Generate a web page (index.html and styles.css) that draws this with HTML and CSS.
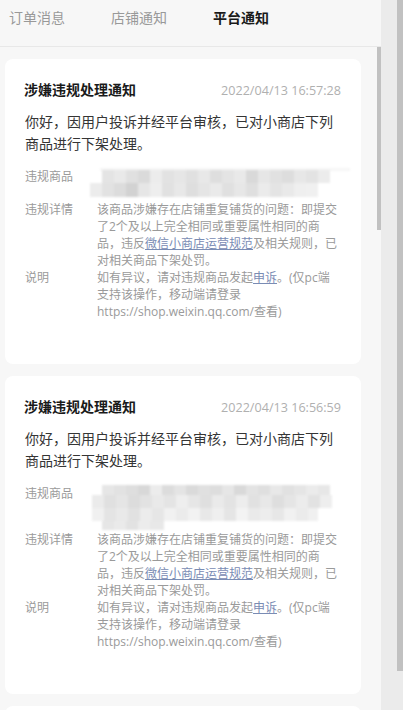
FILE: index.html
```html
<!DOCTYPE html>
<html lang="zh-CN">
<head>
    <meta charset="UTF-8">
    <meta name="viewport" content="width=device-width, initial-scale=1.0">
    <title>平台通知</title>
    <link rel="stylesheet" href="styles.css">
</head>
<body>
    <div class="page">
        <div class="main">
            <nav class="tabs">
                <span class="tab">订单消息</span>
                <span class="tab">店铺通知</span>
                <span class="tab active">平台通知</span>
            </nav>

            <div class="scroll">
                <div class="list">
                    <div class="card">
                        <div class="card-head">
                            <span class="card-title">涉嫌违规处理通知</span>
                            <span class="card-time">2022/04/13 16:57:28</span>
                        </div>
                        <p class="card-text">你好，因用户投诉并经平台审核，已对小商店下列商品进行下架处理。</p>
                        <div class="row row-goods">
                            <span class="row-label">违规商品</span>
                            <div class="row-value">
                                <svg class="mosaic" width="260" height="33" viewBox="0 0 260 33">
                                    <rect x="10" y="0" width="250" height="3" fill="#f6f6f6"/>
                                    <rect x="12" y="2" width="12" height="13" fill="#e4e4e4"/>
                                    <rect x="24" y="2" width="12" height="13" fill="#e9e9e9"/>
                                    <rect x="36" y="2" width="12" height="13" fill="#e0e0e0"/>
                                    <rect x="48" y="2" width="12" height="13" fill="#dadada"/>
                                    <rect x="60" y="2" width="12" height="13" fill="#ececec"/>
                                    <rect x="72" y="2" width="12" height="13" fill="#e2e2e2"/>
                                    <rect x="84" y="2" width="12" height="13" fill="#e6e6e6"/>
                                    <rect x="96" y="2" width="12" height="13" fill="#e0e0e0"/>
                                    <rect x="108" y="2" width="12" height="13" fill="#e8e8e8"/>
                                    <rect x="120" y="2" width="12" height="13" fill="#dedede"/>
                                    <rect x="132" y="2" width="12" height="13" fill="#e4e4e4"/>
                                    <rect x="144" y="2" width="12" height="13" fill="#e9e9e9"/>
                                    <rect x="156" y="2" width="12" height="13" fill="#d9d9d9"/>
                                    <rect x="168" y="2" width="12" height="13" fill="#e6e6e6"/>
                                    <rect x="180" y="2" width="12" height="13" fill="#e1e1e1"/>
                                    <rect x="192" y="2" width="12" height="13" fill="#dddddd"/>
                                    <rect x="204" y="2" width="12" height="13" fill="#e7e7e7"/>
                                    <rect x="216" y="2" width="12" height="13" fill="#e3e3e3"/>
                                    <rect x="228" y="2" width="12" height="13" fill="#ececec"/>
                                    <rect x="0" y="15" width="12" height="14" fill="#ececec"/>
                                    <rect x="12" y="15" width="12" height="14" fill="#e2e2e2"/>
                                    <rect x="24" y="15" width="12" height="14" fill="#dcdcdc"/>
                                    <rect x="36" y="15" width="12" height="14" fill="#d2d2d2"/>
                                    <rect x="48" y="15" width="12" height="14" fill="#e6e6e6"/>
                                    <rect x="60" y="15" width="12" height="14" fill="#eeeeee"/>
                                    <rect x="72" y="15" width="12" height="14" fill="#e1e1e1"/>
                                    <rect x="84" y="15" width="12" height="14" fill="#e8e8e8"/>
                                    <rect x="96" y="15" width="12" height="14" fill="#dedede"/>
                                    <rect x="108" y="15" width="12" height="14" fill="#e5e5e5"/>
                                    <rect x="120" y="15" width="12" height="14" fill="#eaeaea"/>
                                    <rect x="132" y="15" width="12" height="14" fill="#e0e0e0"/>
                                    <rect x="144" y="15" width="12" height="14" fill="#e7e7e7"/>
                                    <rect x="156" y="15" width="12" height="14" fill="#dfdfdf"/>
                                    <rect x="168" y="15" width="12" height="14" fill="#ebebeb"/>
                                    <rect x="180" y="15" width="12" height="14" fill="#e4e4e4"/>
                                    <rect x="192" y="15" width="12" height="14" fill="#e9e9e9"/>
                                    <rect x="204" y="15" width="12" height="14" fill="#efefef"/>
                                    <rect x="216" y="15" width="12" height="14" fill="#f0f0f0"/>
                                </svg>
                            </div>
                        </div>
                        <div class="row">
                            <span class="row-label">违规详情</span>
                            <div class="row-value">该商品涉嫌存在店铺重复铺货的问题：即提交了2个及以上完全相同或重要属性相同的商品，违反<a class="link">微信小商店运营规范</a>及相关规则，已对相关商品下架处罚。</div>
                        </div>
                        <div class="row">
                            <span class="row-label">说明</span>
                            <div class="row-value">如有异议，请对违规商品发起<a class="link">申诉</a>。(仅pc端支持该操作，移动端请登录 https://shop.weixin.qq.com/查看)</div>
                        </div>
                    </div>

                    <div class="card">
                        <div class="card-head">
                            <span class="card-title">涉嫌违规处理通知</span>
                            <span class="card-time">2022/04/13 16:56:59</span>
                        </div>
                        <p class="card-text">你好，因用户投诉并经平台审核，已对小商店下列商品进行下架处理。</p>
                        <div class="row row-goods tall">
                            <span class="row-label">违规商品</span>
                            <div class="row-value">
                                <svg class="mosaic" width="260" height="46" viewBox="0 0 260 46">
                                    <rect x="12" y="0" width="12" height="10" fill="#e6e6e6"/>
                                    <rect x="24" y="0" width="12" height="10" fill="#e2e2e2"/>
                                    <rect x="36" y="0" width="12" height="10" fill="#dedede"/>
                                    <rect x="48" y="0" width="12" height="10" fill="#d8d8d8"/>
                                    <rect x="60" y="0" width="12" height="10" fill="#ececec"/>
                                    <rect x="72" y="0" width="12" height="10" fill="#dcdcdc"/>
                                    <rect x="84" y="0" width="12" height="10" fill="#e4e4e4"/>
                                    <rect x="96" y="0" width="12" height="10" fill="#dadada"/>
                                    <rect x="108" y="0" width="12" height="10" fill="#e0e0e0"/>
                                    <rect x="120" y="0" width="12" height="10" fill="#dddddd"/>
                                    <rect x="132" y="0" width="12" height="10" fill="#e6e6e6"/>
                                    <rect x="144" y="0" width="12" height="10" fill="#d9d9d9"/>
                                    <rect x="156" y="0" width="12" height="10" fill="#e3e3e3"/>
                                    <rect x="168" y="0" width="12" height="10" fill="#dfdfdf"/>
                                    <rect x="180" y="0" width="12" height="10" fill="#e8e8e8"/>
                                    <rect x="192" y="0" width="12" height="10" fill="#e1e1e1"/>
                                    <rect x="204" y="0" width="12" height="10" fill="#e5e5e5"/>
                                    <rect x="216" y="0" width="12" height="10" fill="#ebebeb"/>
                                    <rect x="228" y="0" width="12" height="10" fill="#e7e7e7"/>
                                    <rect x="2" y="10" width="12" height="13" fill="#ebebeb"/>
                                    <rect x="14" y="10" width="12" height="13" fill="#e0e0e0"/>
                                    <rect x="26" y="10" width="12" height="13" fill="#e5e5e5"/>
                                    <rect x="38" y="10" width="12" height="13" fill="#dcdcdc"/>
                                    <rect x="50" y="10" width="12" height="13" fill="#e2e2e2"/>
                                    <rect x="62" y="10" width="12" height="13" fill="#e9e9e9"/>
                                    <rect x="74" y="10" width="12" height="13" fill="#e4e4e4"/>
                                    <rect x="86" y="10" width="12" height="13" fill="#eeeeee"/>
                                    <rect x="98" y="10" width="12" height="13" fill="#e6e6e6"/>
                                    <rect x="110" y="10" width="12" height="13" fill="#dfdfdf"/>
                                    <rect x="122" y="10" width="12" height="13" fill="#eaeaea"/>
                                    <rect x="134" y="10" width="12" height="13" fill="#e3e3e3"/>
                                    <rect x="146" y="10" width="12" height="13" fill="#ededed"/>
                                    <rect x="158" y="10" width="12" height="13" fill="#e1e1e1"/>
                                    <rect x="170" y="10" width="12" height="13" fill="#e8e8e8"/>
                                    <rect x="182" y="10" width="12" height="13" fill="#dedede"/>
                                    <rect x="194" y="10" width="12" height="13" fill="#e5e5e5"/>
                                    <rect x="206" y="10" width="12" height="13" fill="#ececec"/>
                                    <rect x="218" y="10" width="12" height="13" fill="#e2e2e2"/>
                                    <rect x="230" y="10" width="12" height="13" fill="#eeeeee"/>
                                    <rect x="2" y="23" width="12" height="13" fill="#f0f0f0"/>
                                    <rect x="14" y="23" width="12" height="13" fill="#e4e4e4"/>
                                    <rect x="26" y="23" width="12" height="13" fill="#e9e9e9"/>
                                    <rect x="38" y="23" width="12" height="13" fill="#e1e1e1"/>
                                    <rect x="50" y="23" width="12" height="13" fill="#ececec"/>
                                    <rect x="62" y="23" width="12" height="13" fill="#e6e6e6"/>
                                    <rect x="74" y="23" width="12" height="13" fill="#f1f1f1"/>
                                    <rect x="86" y="23" width="12" height="13" fill="#ebebeb"/>
                                    <rect x="98" y="23" width="12" height="13" fill="#f2f2f2"/>
                                    <rect x="110" y="23" width="12" height="13" fill="#e8e8e8"/>
                                    <rect x="122" y="23" width="12" height="13" fill="#efefef"/>
                                    <rect x="134" y="23" width="12" height="13" fill="#e5e5e5"/>
                                    <rect x="146" y="23" width="12" height="13" fill="#f3f3f3"/>
                                    <rect x="158" y="23" width="12" height="13" fill="#eaeaea"/>
                                    <rect x="170" y="23" width="12" height="13" fill="#ededed"/>
                                    <rect x="182" y="23" width="12" height="13" fill="#e7e7e7"/>
                                    <rect x="194" y="23" width="12" height="13" fill="#f1f1f1"/>
                                    <rect x="206" y="23" width="12" height="13" fill="#ebebeb"/>
                                    <rect x="218" y="23" width="10" height="13" fill="#f0f0f0"/>
                                    <rect x="12" y="36" width="12" height="9" fill="#e6e6e6"/>
                                    <rect x="24" y="36" width="12" height="9" fill="#eaeaea"/>
                                    <rect x="36" y="36" width="12" height="9" fill="#e2e2e2"/>
                                    <rect x="48" y="36" width="12" height="9" fill="#ececec"/>
                                    <rect x="60" y="36" width="14" height="9" fill="#e8e8e8"/>
                                </svg>
                            </div>
                        </div>
                        <div class="row">
                            <span class="row-label">违规详情</span>
                            <div class="row-value">该商品涉嫌存在店铺重复铺货的问题：即提交了2个及以上完全相同或重要属性相同的商品，违反<a class="link">微信小商店运营规范</a>及相关规则，已对相关商品下架处罚。</div>
                        </div>
                        <div class="row">
                            <span class="row-label">说明</span>
                            <div class="row-value">如有异议，请对违规商品发起<a class="link">申诉</a>。(仅pc端支持该操作，移动端请登录 https://shop.weixin.qq.com/查看)</div>
                        </div>
                    </div>

                    <div class="card card-empty"></div>
                </div>

                <div class="track"><div class="thumb"></div></div>
            </div>
        </div>

        <div class="outer-bar"><div class="outer-thumb"></div></div>
    </div>
</body>
</html>
```

FILE: styles.css
```css
* { box-sizing: border-box; }
html, body { margin: 0; height: 710px; overflow: hidden; }
body { font-family: "Open Sans", "Noto Sans CJK SC", sans-serif; background: #f7f7f7; color: #333; }

.page { display: flex; height: 710px; }
.main { width: 381px; display: flex; flex-direction: column; background: #f7f7f7; }

.tabs { height: 47px; display: flex; gap: 46px; padding: 8px 0 0 9px; border-bottom: 1px solid #e8e8e8; }
.tab { width: 56px; font-size: 14px; line-height: 20px; color: #999; white-space: nowrap; }
.tab.active { color: #1a1a1a; font-weight: bold; }

.scroll { flex: 1; display: flex; overflow: hidden; }
.list { flex: 1; padding: 12px 16px 0 5px; display: flex; flex-direction: column; gap: 12px; overflow: hidden; }
.track { width: 4px; }
.thumb { height: 183px; background: #c1c1c1; }

.card { flex-shrink: 0; background: #fff; border-radius: 8px; padding: 21px 20px 44px 20px; }
.card-empty { height: 120px; }
.card-head { display: flex; justify-content: space-between; align-items: baseline; height: 20px; }
.card-title { font-size: 14px; line-height: 20px; font-weight: bold; color: #1a1a1a; margin-left: -1px; }
.card-time { font-size: 12.6px; line-height: 20px; color: #b0b0b0; }
.card-text { margin: 11px 0 13px; font-size: 14px; line-height: 22px; color: #353535; }

.row { display: flex; font-size: 12px; line-height: 17px; color: #9a9a9a; }
.row-goods { height: 33px; }
.row-goods.tall { height: 46px; }
.row-label { width: 72px; flex-shrink: 0; }
.row-value { flex: 1; }
.mosaic { display: block; margin-left: -7px; filter: blur(0.8px); }
.link { color: #7a8cb4; text-decoration: underline; }

.outer-bar { width: 22px; background: #ebebeb; display: flex; justify-content: flex-end; }
.outer-thumb { width: 6px; height: 671px; background: #c1c1c1; }
```
